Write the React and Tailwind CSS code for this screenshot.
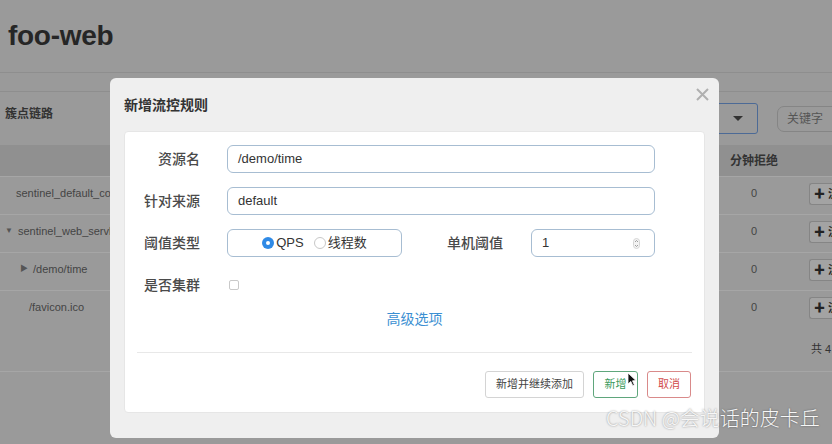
import React from "react";

const font = "font-['Liberation_Sans','Noto_Sans_CJK_SC',sans-serif]";

const rows = [
  { indent: "pl-[16px]", icon: null, name: "sentinel_default_context" },
  { indent: "pl-[5px]", icon: "▼", name: "sentinel_web_servlet_context" },
  { indent: "pl-[20px]", icon: "▶", name: "/demo/time" },
  { indent: "pl-[29px]", icon: null, name: "/favicon.ico" },
];

const Radio = ({ checked }) =>
  checked ? (
    <span className="flex h-[12px] w-[12px] items-center justify-center rounded-full bg-[#2f8ae6]">
      <span className="h-[4px] w-[4px] rounded-full bg-white" />
    </span>
  ) : (
    <span className="h-[12px] w-[12px] rounded-full border border-[#c8c8c8] bg-white" />
  );

const App = () => {
  return (
    <div className={`relative h-[444px] w-[832px] overflow-hidden bg-[#9a9a9a] ${font}`}>
      {/* page behind the dialog */}
      <div className="flex h-[72px] items-center pl-[8px]">
        <h1 className="text-[28px] font-bold leading-none tracking-[-0.3px] text-[#262626]">foo-web</h1>
      </div>
      <div className="h-[20px] border-y border-[#8e8e8e]" />

      {/* filter row */}
      <div className="flex h-[53px] items-center">
        <div className="-mt-[10px] min-w-0 flex-1 pl-[5px] text-[12px] font-semibold text-[#333]">簇点链路</div>
        <div className="flex h-[31px] w-[160px] shrink-0 items-center justify-end rounded-[3px] border-[1.5px] border-[#4c6a96] pr-[14px]">
          <span className="h-0 w-0 border-x-[5px] border-t-[5px] border-x-transparent border-t-[#333]" />
        </div>
        <div className="ml-[19px] flex h-[26px] w-[65px] shrink-0 -mr-[10px] items-center rounded-[7px] border border-[#858585] pl-[9px] text-[12px] text-[#555]">
          关键字
        </div>
      </div>

      {/* table */}
      <div className="flex h-[31px] items-center bg-[#909090] text-[12px] font-semibold text-[#333]">
        <div className="flex-1" />
        <div className="w-[72px] text-center">分钟拒绝</div>
        <div className="w-[42px]" />
      </div>
      {rows.map((r) => (
        <div key={r.name} className="flex h-[38px] items-start border-t border-[#a6a6a6] pt-[8px] text-[11px] leading-[16px] text-[#444]">
          <div className={`flex min-w-0 flex-1 items-center gap-[5px] whitespace-nowrap ${r.indent}`}>
            {r.icon && <span className="text-[8px] text-[#555]">{r.icon}</span>}
            <span>{r.name}</span>
          </div>
          <div className="w-[72px] text-center">0</div>
          <div className="w-[42px] pl-[19px]">
            <div className="-mt-[2px] flex h-[22px] w-[23px] items-center overflow-hidden whitespace-nowrap rounded-l-[3px] border-y border-l border-[#858585] bg-[#a3a3a3] pl-[4px] text-[11px] font-bold text-[#222]">
              ✚ 流
            </div>
          </div>
        </div>
      ))}
      <div className="flex h-[44px] items-center border-b border-[#a6a6a6] pl-[811px] text-[11px] text-[#333]">
        <span className="whitespace-nowrap">共 4 条</span>
      </div>

      {/* dialog */}
      <div className="absolute left-[110px] top-[78px] flex h-[360px] w-[609px] flex-col rounded-[6px] bg-[#efefef] px-[14px]">
        <div className="flex h-[53px] items-center pt-[1px] text-[14px] font-bold text-[#333]">新增流控规则</div>
        <svg className="absolute right-[10px] top-[10px]" width="13" height="13" viewBox="0 0 13 13">
          <path d="M1 1 L12 12 M12 1 L1 12" stroke="#b0b0b0" strokeWidth="2" />
        </svg>

        <div className="flex h-[282px] flex-col rounded-[4px] border border-[#e6e6e6] bg-white px-[12px] pb-[13px]">
          <div className="mt-[13px] flex flex-col gap-[14px] text-[13px]">
            <div className="flex h-[28px] items-center">
              <div className="w-[63px] text-right text-[14px] font-medium text-[#4a4a4a]">资源名</div>
              <div className="ml-[27px] flex h-[28px] w-[428px] items-center rounded-[6px] border-[1.5px] border-[#a7bdd2] pl-[10px] text-[#333]">
                /demo/time
              </div>
            </div>
            <div className="flex h-[28px] items-center">
              <div className="w-[63px] text-right text-[14px] font-medium text-[#4a4a4a]">针对来源</div>
              <div className="ml-[27px] flex h-[28px] w-[428px] items-center rounded-[6px] border-[1.5px] border-[#a7bdd2] pl-[10px] text-[#333]">
                default
              </div>
            </div>
            <div className="flex h-[28px] items-center">
              <div className="w-[63px] text-right text-[14px] font-medium text-[#4a4a4a]">阈值类型</div>
              <div className="ml-[27px] flex h-[28px] w-[175px] items-center justify-center gap-[2px] rounded-[6px] border-[1.5px] border-[#a7bdd2] text-[#333]">
                <Radio checked />
                <span className="mr-[8px]">QPS</span>
                <Radio />
                <span>线程数</span>
              </div>
              <div className="w-[101px] text-right text-[14px] font-medium text-[#4a4a4a]">单机阈值</div>
              <div className="ml-[28px] flex h-[28px] w-[124px] items-center justify-between rounded-[6px] border-[1.5px] border-[#a7bdd2] pl-[10px] pr-[14px] text-[#333]">
                <span>1</span>
                <svg width="7" height="11" viewBox="0 0 7 11">
                  <rect x="0.5" y="0.5" width="6" height="10" rx="3" fill="#f3f3f3" stroke="#d5d5d5" />
                  <path d="M2 4 L3.5 2.5 L5 4 M2 7 L3.5 8.5 L5 7" stroke="#888" fill="none" strokeWidth="0.8" />
                </svg>
              </div>
            </div>
            <div className="flex h-[28px] items-center">
              <div className="w-[63px] text-right text-[14px] font-medium text-[#4a4a4a]">是否集群</div>
              <div className="ml-[29px] h-[10px] w-[10px] rounded-[2px] border border-[#c9c9c9]" />
            </div>
          </div>

          <div className="mt-[10px] flex h-[20px] items-center justify-center text-[14px] text-[#3b8fd2]">高级选项</div>
          <div className="mt-[23px] h-px bg-[#e8e8e8]" />

          <div className="mt-[18px] flex justify-end gap-[9px] pr-[1px] text-[11px]">
            <div className="flex h-[27px] w-[99px] items-center justify-center rounded-[3px] border border-[#d4d4d4] text-[#444]">
              新增并继续添加
            </div>
            <div className="relative flex h-[27px] w-[45px] items-center justify-center rounded-[3px] border border-[#5fa67c] text-[#3a9a5c]">
              新增
              <svg className="absolute left-[33px] top-[0px]" width="10" height="15" viewBox="0 0 10 15">
                <path d="M1 1 L1 12 L3.8 9.4 L5.8 13.8 L7.4 13 L5.5 8.8 L9 8.6 Z" fill="#111" stroke="#fff" strokeWidth="0.8" />
              </svg>
            </div>
            <div className="flex h-[27px] w-[44px] items-center justify-center rounded-[3px] border border-[#d98a8a] text-[#d14c4c]">
              取消
            </div>
          </div>
        </div>
      </div>

      {/* watermark */}
      <div className="absolute left-[606px] top-[404px] font-['Noto_Sans_CJK_SC',sans-serif] text-[20px] font-light leading-[28px] text-[#f7f7f7] [text-shadow:0_0_2px_rgba(0,0,0,0.45)]">
        CSDN @会说话的皮卡丘
      </div>
    </div>
  );
};

export default App;
